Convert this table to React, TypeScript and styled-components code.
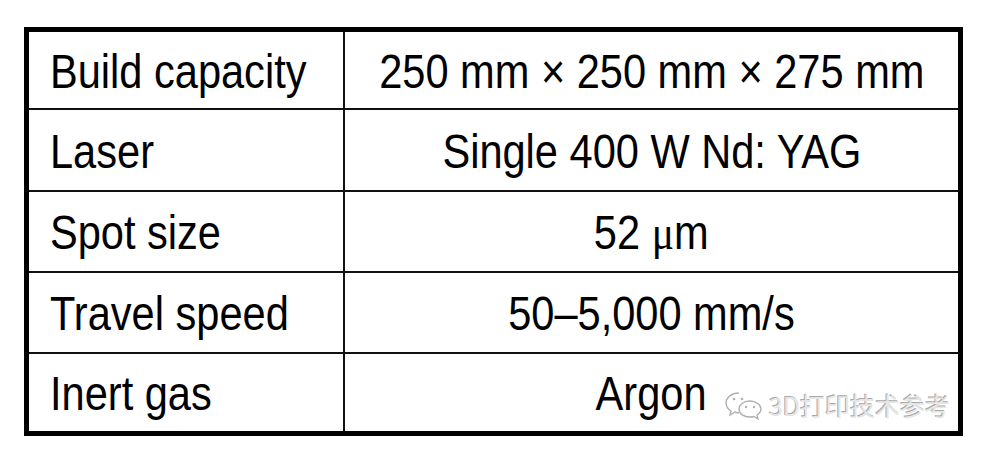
import React from "react";
import styled, { createGlobalStyle } from "styled-components";

const Global = createGlobalStyle`
  html, body { margin: 0; padding: 0; background: #ffffff; }
  body { font-family: "Liberation Sans", Arial, sans-serif; }
`;

const Page = styled.div`
  width: 981px;
  height: 451px;
  box-sizing: border-box;
  padding: 27px 0 0 24px;
  background: #ffffff;
`;

const Table = styled.div`
  position: relative;
  width: 939px;
  box-sizing: border-box;
  border: 5px solid #000;
  display: grid;
  grid-template-columns: 314px minmax(0, 1fr);
  grid-template-rows: 76px 80px 79px 79px 77px;
  gap: 2px;
  background: #111;
`;

const Cell = styled.div<{ $center?: boolean }>`
  background: #ffffff;
  display: flex;
  align-items: center;
  justify-content: ${(p) => (p.$center ? "center" : "flex-start")};
  padding-left: ${(p) => (p.$center ? "0" : "21px")};
  padding-top: 2px;
  overflow: hidden;
  min-width: 0;
`;

const Text = styled.span<{ $center?: boolean }>`
  display: inline-block;
  font-size: 48px;
  color: #000;
  white-space: nowrap;
  transform: scaleX(0.866);
  transform-origin: ${(p) => (p.$center ? "center" : "left")} center;
`;

const Mu = styled.span`
  font-family: "Liberation Serif", "Times New Roman", serif;
`;

const Watermark = styled.div`
  position: absolute;
  right: 8px;
  bottom: 8px;
  display: flex;
  align-items: center;
  gap: 6px;
  font-family: "Noto Sans CJK SC", "Liberation Sans", sans-serif;
  font-size: 25px;
  color: #e6e6e6;
  text-shadow: -1px -1px 0 #a8a8a8, 1px 1px 0 #ffffff;
`;

const WeChatIcon = () => (
  <svg width="38" height="30" viewBox="0 0 38 30" fill="none" stroke="#b0b0b0" strokeWidth="1.4">
    <path d="M14 3 C6 3 1 8 1 13 C1 16 3 19 6 21 L5 25 L10 22 C11 22.5 12.5 23 14 23" />
    <circle cx="9" cy="9" r="1.3" fill="#b0b0b0" stroke="none" />
    <circle cx="17" cy="9" r="1.3" fill="#b0b0b0" stroke="none" />
    <path d="M25 11 C18 11 14 15 14 19 C14 24 19 27 25 27 C27 27 28 26.8 29 26.5 L33 29 L32 25 C35 23 36 21 36 19 C36 15 31 11 25 11 Z" />
    <circle cx="21" cy="17" r="1.2" fill="#b0b0b0" stroke="none" />
    <circle cx="29" cy="17" r="1.2" fill="#b0b0b0" stroke="none" />
  </svg>
);

const rows: [string, React.ReactNode][] = [
  ["Build capacity", "250 mm × 250 mm × 275 mm"],
  ["Laser", "Single 400 W Nd: YAG"],
  ["Spot size", <>{"52\u00a0"}<Mu>μ</Mu>m</>],
  ["Travel speed", "50–5,000 mm/s"],
  ["Inert gas", "Argon"],
];

export default function App() {
  return (
    <Page>
      <Global />
      <Table>
        {rows.map(([k, v], i) => (
          <React.Fragment key={i}>
            <Cell>
              <Text>{k}</Text>
            </Cell>
            <Cell $center>
              <Text $center>{v}</Text>
            </Cell>
          </React.Fragment>
        ))}
        <Watermark>
          <WeChatIcon />
          <span>3D打印技术参考</span>
        </Watermark>
      </Table>
    </Page>
  );
}
